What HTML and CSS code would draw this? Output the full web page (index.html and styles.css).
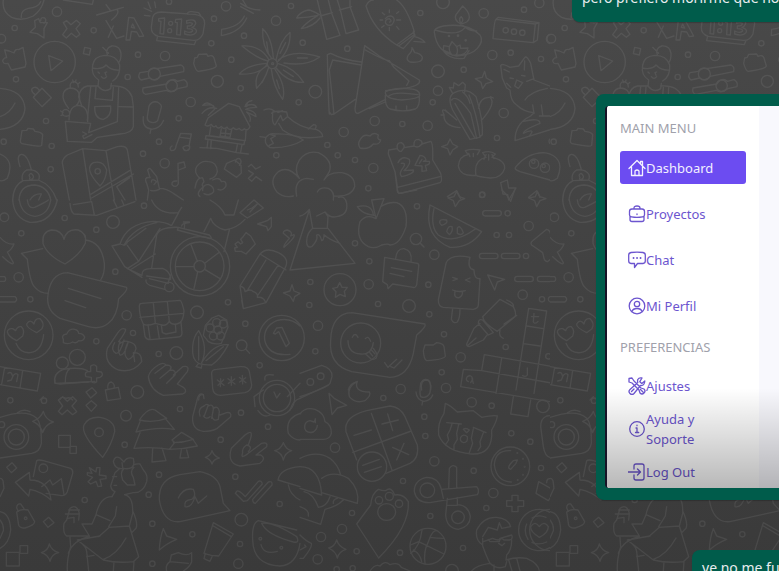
FILE: index.html
```html
<!DOCTYPE html>
<html lang="es">
<head>
<meta charset="utf-8">
<meta name="viewport" content="width=device-width, initial-scale=1">
<title>Chat</title>
<link rel="stylesheet" href="styles.css">
</head>
<body>
<svg class="wallpaper" aria-hidden="true">
  <defs>
    <g id="art">
      <!-- top left -->
      <g>
        <path d="M10 0Q5 35 35 52Q65 65 100 48Q125 30 132 0M64 52Q62 30 85 25Q115 22 122 5M190 0L277 13L280 0M290 45L370 22M318 14L330 30M335 60Q360 40 352 30M318 62L350 115L372 108M340 78L325 112M378 120L386 52L402 54L431 108L418 110L410 96L394 94L390 120ZM394 82L404 84L398 72Z"/>
        <path d="M116 56L121 68L142 68L132 86L132 114L112 101L90 97L106 82L104 62ZM122 62Q122 50 134 54Q142 62 132 70M190 68L200 62L213 74L229 61L241 71L228 86L240 103L229 112L214 100L199 114L188 104L201 86Z"/>
        <path d="M482 36L585 43Q615 48 614 70L609 101Q600 122 580 121L475 109Q453 103 454 82L458 52Q462 37 482 36M472 112L470 122L583 134L587 124M562 42Q563 34 575 35L596 38L602 46M432 24L455 34M433 46L450 48M444 6L452 26M464 6L467 23M476 56L494 54L491 102L480 101L483 64L476 63ZM527 58L545 57L541 105L530 104L532 68L526 67ZM560 62Q588 55 587 71Q583 80 576 82Q594 88 588 98Q579 110 554 102V93Q570 101 578 93Q579 86 562 86V78Q578 78 577 70Q570 66 560 70Z"/>
        <circle cx="512" cy="70" r="6"/><circle cx="509" cy="92" r="6"/>
        <circle cx="171" cy="35" r="14"/><circle cx="44" cy="84" r="8"/><circle cx="281" cy="91" r="8"/><circle cx="507" cy="5" r="8"/><circle cx="678" cy="19" r="14"/><circle cx="642" cy="56" r="8"/><circle cx="732" cy="107" r="8"/><circle cx="634" cy="130" r="8"/><circle cx="4" cy="116" r="13"/><circle cx="48" cy="238" r="8"/><circle cx="414" cy="164" r="8"/><circle cx="495" cy="168" r="14"/><circle cx="383" cy="231" r="8"/><circle cx="694" cy="179" r="8"/><circle cx="652" cy="244" r="18"/><circle cx="722" cy="265" r="8"/><circle cx="572" cy="306" r="14"/><circle cx="536" cy="355" r="8"/><circle cx="138" cy="363" r="8"/><circle cx="155" cy="438" r="8"/><circle cx="11" cy="425" r="8"/><circle cx="477" cy="425" r="8"/><circle cx="429" cy="461" r="8"/><circle cx="494" cy="490" r="14"/><circle cx="152" cy="508" r="8"/>
        <circle cx="164" cy="186" r="62"/><path d="M146 167L188 183L153 212ZM254 142L272 146L268 165L250 161Z"/>
        <path d="M28 153L42 159Q46 145 56 149L69 142L78 190L75 201L34 210L24 190Q8 194 8 181Q14 171 20 173L14 150Z"/>
        <path d="M733 48Q720 80 665 88L664 107Q720 98 740 54M722 10Q750 30 780 30M722 20L760 40M728 0L740 20"/>
        <path d="M296 240Q272 225 278 195Q283 168 315 166Q350 166 359 195Q362 228 338 243M277 204Q306 210 318 195Q334 212 358 210M322 164Q315 145 335 138Q359 136 363 160Q364 180 356 188M308 142L326 160M298 220L294 216M320 216L315 218L318 226M304 230Q312 240 320 230M296 240L294 258Q312 280 332 266L334 250M294 258L262 258Q240 263 236 290L246 320M332 258Q382 254 396 290L400 320V380Q396 400 360 402L292 412L275 427L202 424L196 364L272 370L266 398L352 365L356 260M272 260L262 360M288 262L285 296L337 301L340 262M356 320L400 321M284 320L332 318Q336 348 310 358Q283 356 284 320M248 396L260 402L248 408L252 416L276 404"/>
        <path d="M207 360Q208 316 236 316Q266 318 263 365M206 325Q185 300 190 280Q196 265 212 264Q238 266 239 290Q240 306 228 317M211 262Q208 246 222 245Q235 248 235 261M218 240L221 248M228 240L226 247M240 247L234 252M187 345Q186 328 198 328Q212 332 208 346Q200 352 187 345M182 333L189 338M183 347L189 344"/>
        <path d="M126 265L154 293L126 320L100 292ZM107 285Q92 276 96 266Q106 257 116 268L118 274M0 265Q70 270 75 325Q70 380 0 388M0 350Q30 340 45 309M66 392L80 391L84 385L100 387L105 394Q124 396 128 404L125 436Q120 442 66 431Q61 430 61 423Z"/>
        <path d="M420 218L445 214Q452 202 469 206L543 195Q555 200 551 215L480 229Q468 246 449 234L423 240Q411 230 420 218M429 264L500 252Q516 230 532 244L552 239Q565 246 561 260L533 266Q514 282 499 271L437 283Q425 278 429 264"/><circle cx="463" cy="222" r="18"/><circle cx="515" cy="257" r="17"/>
        <path d="M447 318Q455 302 472 306Q486 314 484 322L473 362Q464 372 448 365Q440 359 442 350ZM430 350Q426 384 453 387Q478 390 491 361M453 387L450 400M584 174L592 172L596 163L620 162L624 169Q638 163 642 174L649 198Q646 207 595 214Q588 214 581 190Z"/>
        <path d="M615 375L624 354L686 310L718 320L750 380Q743 395 733 386Q725 396 718 385Q708 393 700 383Q688 394 681 381Q672 391 664 379Q654 390 648 377Q640 385 634 373Q624 382 615 375M632 381L628 407L736 422L738 392M618 407L734 422L732 434L616 417ZM624 420L621 444M634 420L632 446M712 434L708 456M726 434L722 456M664 386L660 408L690 412L695 390M678 387L675 412M662 399L692 402M600 443L650 445L710 458L745 462M608 316Q620 300 642 320M608 316Q640 312 642 320M606 340Q625 318 650 325M625 346L644 328M740 320Q740 302 756 302Q738 306 735 320Q760 306 770 322Q748 322 737 328Q768 332 768 350L740 336Q755 350 750 364"/>
        <path d="M516 438Q506 445 514 452Q528 452 528 438L542 400L574 402L567 438Q558 435 549 442Q551 453 560 452Q571 449 569 438M541 412L571 416M530 543Q514 542 516 554Q528 566 535 551L534 490L552 486L556 502L536 510"/>
        <path d="M187 489Q187 475 202 465L248 446L318 452L352 440Q377 435 382 450L408 600M187 489L208 600M248 446L272 600M318 452L343 600M272 583L390 511M275 594L400 522L350 560L375 600M350 560L388 534M300 558Q250 505 280 488Q310 480 320 510Q318 540 300 558"/><circle cx="293" cy="514" r="8"/>
        <path d="M60 500Q48 466 64 463Q82 462 94 509M67 540Q63 520 80 510Q106 507 116 522Q120 530 116 540M38 600Q40 555 70 542L115 540Q155 555 170 600M57 600Q60 555 104 555Q145 560 152 600M90 600Q102 580 124 582L116 600M90 532Q84 524 93 520Q104 528 98 536Q86 543 90 532M0 462Q45 480 22 535Q10 545 0 542"/>
        <path d="M446 570L440 550Q430 530 450 533L443 510Q448 501 454 510L470 530L478 565Q500 565 520 580L550 600M446 570L442 600M454 546Q455 532 470 545L462 554M452 571Q462 575 478 568M598 533Q580 516 590 500Q604 480 625 485Q650 485 652 515Q648 533 630 537M585 564Q590 530 608 534L612 545Q602 555 610 560Q586 580 600 590M638 540Q660 530 664 545Q680 540 678 558Q668 575 654 568M608 572Q606 555 625 553Q643 560 641 575Q630 590 612 581"/>
        <path d="M704 480L680 490L673 507L710 532L724 519L723 496ZM706 486Q708 473 719 476Q728 484 718 496M745 500L754 493L767 507L781 500M746 512L760 521L745 535L755 544L768 530L785 542"/>
      </g>
      <!-- top right -->
      <g transform="translate(780 0)">
        <path d="M172 0L182 42L200 118L240 106L215 40L205 0M181 48L217 38M232 0L240 26L258 101L296 90L270 20L270 0M238 30L275 20M178 44Q155 30 145 30Q120 35 110 54Q145 52 174 46Q135 70 124 86Q160 80 180 54"/>
        <path d="M318 18Q325 0 340 0M318 18Q340 90 410 135L463 95Q440 20 410 0M410 135L430 146L465 106L460 94M416 138L462 104M464 110Q485 115 495 127L462 124M376 56Q386 44 398 50Q408 60 396 74Q384 80 377 70Q374 58 388 56Q398 64 389 66M388 30V38M388 82V92M360 60H368M410 60H422M367 38L374 44M410 80L417 88M410 40L416 35M365 82L372 77M456 142Q457 155 445 165Q436 180 450 186Q488 190 487 172Q482 160 464 158L458 146"/>
        <path d="M523 96Q520 85 550 78Q625 68 660 105Q672 123 652 145Q635 165 590 168Q530 160 523 96M525 90Q590 110 613 85M608 76Q626 94 650 93M602 72Q580 60 588 44L608 18Q628 35 628 52Q628 68 602 72M602 70Q595 55 604 50Q614 60 602 70M552 155Q570 180 612 175L627 152M572 160L550 150L551 137L568 140L576 125L590 140L600 135L602 145L624 144Q620 170 576 165Q566 155 568 140M590 140Q596 155 588 165"/>
        <path d="M708 58Q703 60 699 116L820 128L832 120L837 68L715 52ZM708 58L826 72L820 128M826 72L837 68"/><circle cx="737" cy="91" r="8"/><circle cx="762" cy="95" r="8"/><circle cx="787" cy="98" r="8"/><circle cx="567" cy="108" r="2"/><circle cx="594" cy="107" r="2"/><circle cx="617" cy="121" r="2"/>
        <circle cx="93" cy="18" r="8"/><circle cx="48" cy="62" r="14"/><circle cx="128" cy="128" r="8"/><circle cx="262" cy="146" r="8"/><circle cx="481" cy="39" r="8"/><circle cx="549" cy="7" r="19"/><circle cx="671" cy="40" r="14"/><circle cx="792" cy="29" r="8"/><circle cx="838" cy="9" r="14"/><circle cx="873" cy="117" r="14"/><circle cx="697" cy="165" r="14"/><circle cx="752" cy="158" r="8"/><circle cx="843" cy="177" r="8"/><circle cx="166" cy="275" r="19"/><circle cx="116" cy="307" r="8"/><circle cx="534" cy="214" r="19"/><circle cx="611" cy="209" r="8"/><circle cx="534" cy="272" r="14"/><circle cx="518" cy="307" r="8"/><circle cx="344" cy="363" r="14"/><circle cx="427" cy="372" r="8"/><circle cx="503" cy="377" r="14"/><circle cx="251" cy="396" r="14"/><circle cx="202" cy="435" r="8"/><circle cx="731" cy="339" r="14"/><circle cx="711" cy="414" r="8"/><circle cx="49" cy="466" r="8"/><circle cx="233" cy="466" r="8"/><circle cx="285" cy="480" r="8"/><circle cx="340" cy="504" r="14"/><circle cx="325" cy="565" r="8"/><circle cx="667" cy="584" r="8"/>
        <circle cx="37" cy="191" r="15"/><circle cx="38" cy="191" r="3"/><path d="M35 175Q5 140 8 86Q35 110 40 174M48 180Q60 120 90 97Q93 150 53 185M55 180Q100 145 179 171Q140 200 72 189M55 191Q105 205 131 247Q85 250 48 204M45 208Q80 260 68 298Q40 260 34 208M26 202Q15 240 -10 265Q-20 220 20 198M23 183Q-10 175 -54 138Q0 135 26 178M22 192Q0 225 -62 222Q-40 195 20 190M25 160L20 126M60 160L77 128M112 174H142M70 210L100 230M50 240L58 266M20 220L6 248"/>
        <path d="M208 342Q205 310 202 164L212 160Q250 180 304 186M218 180L303 195M218 180L208 210L222 342L214 344L208 336M222 342L286 298M314 137L358 168L478 240Q485 255 440 264L377 272M314 137L285 325Q285 342 294 340L377 298M316 150Q370 180 388 182L400 200L447 243L440 256M328 326L376 306"/>
        <path d="M376 276Q400 262 440 266Q480 266 479 286Q476 296 425 300Q374 296 376 276M376 286Q374 320 390 327Q430 338 466 327Q480 320 478 290M384 290Q400 272 474 284M408 318V328M440 318V328"/>
        <path d="M630 418L578 330Q560 290 583 278Q620 260 648 290Q670 360 667 404L658 412ZM650 415L632 340Q590 280 575 300M645 415L585 310M660 412Q650 340 627 285M608 276Q625 290 630 310M578 280L568 262L580 264L582 248L596 257L608 247L616 254L614 276M552 344Q540 320 562 336L590 360M552 344Q550 378 600 383M656 325Q660 290 690 292Q710 310 664 362M543 345L552 345M556 330L562 337M691 290L700 294"/>
        <path d="M674 214L679 234L698 245L678 251L668 266L663 247L646 236L667 232ZM570 417L578 432L593 440L578 450L570 465L563 446L545 440L562 434Z"/>
        <path d="M900 270L822 240L812 190Q800 165 794 173L776 198L750 202Q725 188 722 197L727 235L740 264L750 270Q752 305 770 315Q790 335 822 338L812 348Q765 370 765 422L900 380M794 183L793 210M732 208L748 216M750 234L760 236M785 226L795 228M740 250L752 262M764 258L770 240L788 248L775 265ZM800 244L822 236M818 315L822 340M844 315L848 344M790 364Q840 352 840 370Q790 390 790 400Q830 382 808 408M838 348L870 348"/>
        <path d="M35 340Q40 330 80 336L83 350Q120 385 168 388Q188 396 188 410Q110 422 68 390L56 370M38 340Q35 370 45 375L62 346L68 362L82 350M42 332Q30 322 12 330M54 338L68 332M145 387L160 374Q173 374 166 386M45 402Q100 400 130 420Q90 445 30 443Q10 430 18 412Q30 398 45 402M32 404L46 408L32 416L40 430L28 436M0 410L16 412M300 420Q310 400 330 408Q340 395 355 405Q350 418 362 420Q360 435 340 432Q325 450 300 444Q292 430 300 420"/>
        <path d="M386 450L412 446Q408 428 424 428Q435 435 432 443L462 438Q460 418 475 418Q488 422 486 432L512 424Q520 430 518 480L542 520Q548 545 540 548L424 580Q412 580 412 572L405 515L385 462ZM405 515Q410 545 412 562L540 530M412 446Q416 455 424 454L432 443M462 438Q474 446 486 432M414 488Q425 465 448 478Q455 490 432 512L460 510Q465 520 425 530Q415 520 430 502Q440 488 424 490M465 496L480 466Q496 468 498 480L490 484L508 484Q512 494 496 496L500 512L486 514L486 498ZM478 490L486 478"/>
        <path d="M648 526Q600 530 595 498Q598 468 624 464L616 452Q635 445 660 450L652 464M648 526Q640 480 678 472L668 458Q690 450 706 462L696 472Q735 480 734 505Q725 535 690 534Q655 530 648 526M626 460L630 470M640 460V470M678 464L672 478M686 464V480M696 464L702 476M768 500Q800 460 850 458Q890 460 900 500M768 500Q760 508 780 515L870 540"/><circle cx="822" cy="491" r="14"/><circle cx="820" cy="485" r="5"/><circle cx="855" cy="503" r="14"/><circle cx="851" cy="498" r="5"/>
        <path d="M118 535Q100 510 118 480Q140 450 175 458Q220 480 208 515L192 540M118 535Q85 495 55 515Q25 540 50 575Q70 595 100 588M192 540Q205 515 245 518Q285 525 284 560Q275 592 222 588M110 588Q100 540 140 535L160 538M172 576Q180 560 205 565Q225 575 220 600M722 548L742 540L746 564L768 564L746 600L743 584L729 582ZM562 590L590 572L602 596M806 592L830 572L840 592"/>
      </g>
      <!-- middle left -->
      <g transform="translate(0 600)">
        <circle cx="13" cy="52" r="13"/><circle cx="194" cy="54" r="8"/><circle cx="64" cy="100" r="8"/><circle cx="289" cy="89" r="8"/><circle cx="339" cy="66" r="19"/><circle cx="432" cy="17" r="8"/><circle cx="346" cy="215" r="8"/><circle cx="56" cy="232" r="14"/><circle cx="91" cy="298" r="8"/><circle cx="380" cy="346" r="14"/><circle cx="399" cy="399" r="8"/><circle cx="289" cy="424" r="8"/><circle cx="476" cy="462" r="8"/><circle cx="529" cy="459" r="19"/><circle cx="591" cy="337" r="19"/><circle cx="684" cy="307" r="8"/><circle cx="736" cy="371" r="8"/><circle cx="779" cy="496" r="8"/><circle cx="412" cy="576" r="19"/><circle cx="725" cy="436" r="16"/><path d="M737 447L749 460"/>
        <path d="M38 0Q42 55 90 67Q155 70 172 0M58 0Q65 45 105 49Q145 45 152 0M82 0Q85 28 104 22Q135 8 145 0M210 10Q212 35 222 42L290 46L405 5M220 14L275 5L283 45M340 0L352 24M365 0L372 16M455 0Q475 45 535 38L545 22M536 38L515 76M630 0Q665 20 675 45H702L715 0M720 38L762 0L790 24L742 54ZM742 30L756 24L772 12L750 36M632 55Q640 80 675 90Q710 85 735 58M632 55L612 95M688 90L672 155M773 72L802 62L814 52V80L804 92L800 80Z"/>
        <path d="M192 118Q200 85 235 90Q262 100 256 130Q240 165 195 192Q140 165 129 130Q125 95 155 90Q185 90 192 118M256 120Q305 125 313 190Q315 220 302 240M64 160L128 146M64 160L82 178Q90 250 105 262Q120 280 145 280"/>
        <path d="M202 218L380 262Q385 270 356 296Q352 350 325 370Q300 390 265 380L180 355Q142 335 143 295Q148 220 202 218M205 265L303 296M195 302L257 323"/>
        <path d="M360 132Q380 70 460 64Q500 66 512 76M372 136Q400 82 470 68M360 132L336 138L374 200L426 232M360 132Q380 140 382 126L438 85M382 136L416 184L382 206L426 226M466 162L390 210M416 184L480 85M455 204L470 105Q480 80 535 82M535 82L628 105Q638 115 630 116L532 90ZM545 78Q545 70 568 68M550 66L568 66M554 72L553 84M426 226Q425 206 450 206L488 205Q512 215 512 238L440 228M438 240Q436 250 450 256L494 268M448 236L505 250M512 225L505 246"/>
        <circle cx="600" cy="199" r="89"/><circle cx="599" cy="199" r="73"/><circle cx="599" cy="199" r="17"/><circle cx="508" cy="261" r="14"/><path d="M528 200H582M573 134L592 184M656 158L614 190M660 236L614 208M582 266L593 216"/>
        <path d="M705 132L714 125L722 132L728 128L722 118L728 112L738 98L752 108L766 132L738 162L724 154L706 154L704 144L712 142ZM720 258L780 162Q800 140 835 158Q870 175 856 202L798 308L730 326L720 258Q735 262 735 275Q750 265 760 275Q775 280 772 292Q790 290 796 305M730 326L725 302M780 162L858 210M744 268L798 180M772 288L834 196M850 100Q848 92 862 90Q880 96 872 108L882 104Q888 110 852 142Q848 138 868 115Z"/>
        <path d="M876 254L882 273L900 280L884 290L880 304L870 288L850 279L870 273ZM0 112Q20 135 42 132Q35 150 22 156L40 188Q40 200 8 170M0 230H14Q20 237 14 244H0M0 290H45Q55 297 45 306H0"/>
        <circle cx="86" cy="406" r="73"/><path d="M47 392Q52 378 64 380Q75 390 68 408L50 422Q25 410 22 396Q24 384 38 386ZM102 372Q105 354 120 356Q135 370 126 386L110 398Q78 382 80 372Q90 355 102 372M48 430Q60 460 90 458Q125 455 131 404M190 418Q182 405 200 402Q208 385 224 388Q235 390 236 400Q250 400 254 412Q250 425 236 422Q230 432 218 426Q205 435 190 428Z"/>
        <path d="M418 318Q418 310 425 310L540 301Q545 302 552 332Q550 370 530 372Q515 375 508 364Q498 380 482 374Q475 372 466 370Q440 380 430 372Q418 350 418 318M460 309L466 370M502 304L508 366M420 352L550 340M430 374L435 410Q440 420 452 419L535 411Q545 410 546 400L543 366M444 374L450 416M472 378L478 416M484 376L487 398L498 402L528 396L526 372"/>
        <path d="M352 400Q365 380 377 388Q378 395 356 425M352 400L322 445Q310 490 355 510Q400 520 425 485Q425 455 400 458L404 485M344 428Q330 450 348 460Q360 462 372 420M360 425Q350 450 360 465Q372 470 385 425Q375 420 360 430M385 425Q408 430 408 446Q400 475 385 478Q365 465 385 425"/>
        <path d="M596 392Q580 410 578 440Q575 480 596 490Q610 495 635 495Q660 480 685 434Q640 430 605 488M596 392Q625 440 606 486M596 490L588 500L604 504L606 492M596 410V480M670 440L618 482M610 406L616 376L636 354L656 346L680 360L684 382L664 430Q640 435 625 425Z"/><circle cx="630" cy="384" r="12"/><circle cx="650" cy="368" r="12"/><circle cx="654" cy="390" r="12"/><circle cx="670" cy="372" r="12"/><circle cx="640" cy="408" r="12"/><circle cx="662" cy="408" r="12"/>
        <circle cx="845" cy="414" r="68"/><path d="M900 378Q870 350 830 362Q790 380 794 420Q805 470 870 463M820 400L830 384L846 382L868 430L858 440L836 395L826 402Z"/>
        <path d="M0 500L122 520L112 573L0 554M14 503L5 552M68 512L60 564M24 520Q35 512 38 530Q45 516 54 524L50 545M23 543L34 540L38 530"/><circle cx="187" cy="489" r="18"/><circle cx="232" cy="472" r="24"/><path d="M165 550Q158 520 190 508Q240 500 262 512M165 550L266 546M196 548Q195 515 210 506M272 498Q284 490 290 500V514L304 516Q312 526 300 532L290 534V546Q280 552 274 544V532L258 530Q252 520 262 515H272Z"/>
        <path d="M445 530Q450 510 475 495Q490 485 498 495L465 520M498 495Q520 496 510 510L480 535M510 510Q530 510 525 525L500 550M520 525L548 500Q570 495 562 515L532 552L550 562Q565 575 548 582L490 586Q450 570 445 530M635 520Q635 508 650 508L720 500Q745 498 748 515L755 555Q755 572 735 578L662 586Q640 585 638 565ZM652 540L672 556M662 536L661 560M671 539L654 556M684 536L705 552M694 530L694 556M704 537L685 550M718 532L738 548M727 526L728 552M737 533L719 546"/>
        <path d="M316 570L355 562L362 596L322 602ZM324 568Q320 548 334 546Q346 552 342 565M130 590L120 600M180 598Q185 588 198 595Q210 590 218 600M258 576L276 563L290 578L272 594ZM596 600Q596 582 610 584L612 596"/>
      </g>
      <!-- middle right -->
      <g transform="translate(900 570)">
        <circle cx="351" cy="49" r="8"/><circle cx="546" cy="15" r="8"/><circle cx="165" cy="160" r="8"/><circle cx="208" cy="214" r="8"/><circle cx="403" cy="194" r="14"/><circle cx="206" cy="283" r="14"/><circle cx="31" cy="276" r="8"/><circle cx="28" cy="345" r="8"/><circle cx="54" cy="407" r="14"/><circle cx="46" cy="484" r="8"/><circle cx="234" cy="342" r="8"/><circle cx="327" cy="348" r="19"/><circle cx="385" cy="284" r="8"/><circle cx="388" cy="373" r="8"/><circle cx="432" cy="433" r="8"/><circle cx="482" cy="502" r="14"/><circle cx="425" cy="547" r="8"/><circle cx="617" cy="471" r="8"/><circle cx="745" cy="499" r="8"/><circle cx="668" cy="314" r="14"/><circle cx="726" cy="328" r="8"/><circle cx="686" cy="108" r="14"/><circle cx="623" cy="70" r="8"/><circle cx="590" cy="135" r="8"/><circle cx="627" cy="135" r="8"/><circle cx="678" cy="198" r="8"/><circle cx="348" cy="147" r="17"/><path d="M360 159L372 171"/>
        <rect x="548" y="62" width="56" height="16" rx="8"/><rect x="538" y="190" width="56" height="16" rx="8"/><rect x="604" y="190" width="56" height="16" rx="8"/><rect x="644" y="259" width="56" height="16" rx="8"/><rect x="712" y="259" width="56" height="16" rx="8"/><rect x="745" y="320" width="56" height="16" rx="8"/>
        <path d="M28 60L-30 240L165 220L84 115H38Q20 130 20 155M0 78Q15 75 28 58L38 115M50 78L75 66L84 80L82 112M75 66Q90 85 110 80Q145 75 140 40Q135 15 115 22M20 155Q20 175 35 170Q55 150 50 135Q60 130 65 152Q72 150 72 134Q90 150 120 160"/>
        <path d="M228 86Q200 70 180 95Q165 150 205 170Q225 178 245 165Q265 160 270 165Q300 165 318 110Q325 50 290 38Q265 35 242 50M228 86L215 30L252 26ZM220 74Q215 40 172 50Q185 72 222 76"/>
        <path d="M390 45L545 125Q510 175 450 172Q370 140 390 45M402 56Q390 110 415 135Q460 165 525 118M420 100Q415 85 440 90Q445 100 425 106ZM440 125Q445 105 456 110Q460 125 448 134ZM472 114Q480 102 490 128Q485 138 472 130Z"/>
        <path d="M254 202L352 220Q358 222 356 230L350 285Q345 295 340 292L278 282L264 296L262 284L248 275ZM287 206Q290 175 312 176Q338 182 333 214M274 233L335 244M270 250L312 260"/>
        <circle cx="120" cy="299" r="48"/><path d="M119 278L126 292H142L133 304L136 320L120 313L106 322L108 305L98 295L112 292Z"/>
        <path d="M510 202Q450 190 438 220L415 330Q415 350 430 352L520 358Q535 355 535 345L540 266Q522 268 522 240Q500 235 510 202M458 262L472 267L459 272M510 264L496 270L510 276M458 300Q475 308 496 302M465 304Q460 325 478 323Q490 315 487 304M458 355L454 388Q460 402 472 396Q480 385 480 358M563 255L614 268L592 276L584 300Z"/>
        <path d="M740 118Q750 120 752 134L765 160L785 162Q796 168 788 178L742 215Q735 215 732 205L728 188L695 165Q690 158 698 152ZM762 202L788 225Q795 218 785 205L775 190"/>
        <path d="M470 4L478 20L494 26L478 32L466 50L460 32L444 24L462 20ZM712 4L720 20L738 26L720 32L710 50L704 32L686 24L706 20ZM606 0L620 15L632 34L644 0M292 0L296 10L350 0"/>
        <path d="M155 368L375 402Q380 410 350 435L340 490Q325 560 270 562L155 545Q85 525 92 450Q95 370 155 368M144 452Q145 490 182 492Q215 495 220 458M157 442Q165 425 174 442M196 446Q205 435 212 454M197 492L214 508Q235 510 230 490L220 475M208 486L218 498M214 480L225 492M254 518L264 532L290 508M272 530L282 534L306 510"/><circle cx="182" cy="459" r="60"/>
        <path d="M375 465L400 465L410 458Q430 460 432 470L436 498Q435 508 380 512Q372 510 370 482ZM600 328L640 350Q650 370 645 380L592 424Q550 400 548 380ZM620 330Q645 340 640 352M650 376L612 402M548 390Q535 385 535 400L565 435L580 428ZM540 400L522 415L500 462Q500 470 508 470L550 450L562 434M504 466L528 444M600 420Q595 440 610 445"/>
        <path d="M686 355L740 363L702 610M686 355L648 600M680 408L730 416M670 461L720 468M553 494L873 550L864 604M553 494L545 542L490 538L482 590L864 654M545 542L862 598M605 504L588 610M702 370L700 396Q705 404 714 394M694 380H716M682 534V555Q678 562 668 557M505 575Q495 570 502 560Q515 552 518 568L512 578M516 565L520 580"/>
        <path d="M0 550L65 526Q98 535 96 560L90 580Q80 594 0 620M172 575Q150 580 145 600M365 600Q360 570 380 570Q395 572 392 600"/><circle cx="31" cy="576" r="10"/><circle cx="62" cy="559" r="10"/>
      </g>
      <!-- bottom left -->
      <g transform="translate(0 1140)">
        <circle cx="31" cy="61" r="8"/><circle cx="132" cy="62" r="8"/><circle cx="374" cy="194" r="8"/><circle cx="378" cy="107" r="16"/><circle cx="540" cy="87" r="8"/><circle cx="723" cy="98" r="8"/><circle cx="804" cy="140" r="8"/><circle cx="662" cy="179" r="8"/><circle cx="706" cy="290" r="8"/><circle cx="477" cy="284" r="8"/><circle cx="446" cy="344" r="8"/><circle cx="254" cy="360" r="8"/><circle cx="457" cy="431" r="8"/><circle cx="577" cy="463" r="8"/><circle cx="457" cy="551" r="8"/><circle cx="724" cy="419" r="19"/><circle cx="720" cy="492" r="8"/><circle cx="715" cy="551" r="14"/><circle cx="839" cy="372" r="8"/><circle cx="297" cy="157" r="13"/><circle cx="130" cy="265" r="13"/>
        <path d="M175 60L188 50L202 64L218 50L230 62L216 78L230 95L218 104L202 90L186 104L175 94L188 78ZM258 76L274 62L290 76L274 94ZM308 232Q240 160 252 135Q265 110 300 112Q345 120 344 155Q335 195 308 232M176 166H211V202H176ZM210 199H229V220H210ZM20 262L36 248L50 264L34 278ZM130 425L146 412L162 428L144 442ZM19 517H58V558H19ZM60 497H83V520H60Z"/>
        <path d="M130 94Q136 118 160 126Q135 134 128 158Q122 134 98 124Q122 116 130 94M0 112Q80 85 110 115Q125 130 124 190Q120 215 95 220L0 234M52 98Q70 85 90 95"/><circle cx="49" cy="171" r="37"/><circle cx="49" cy="171" r="24"/><circle cx="5" cy="134" r="9"/>
        <path d="M418 120Q445 80 465 90L500 115Q460 130 418 120M420 125L408 156Q470 140 523 148L498 118M420 158L402 205Q460 200 510 208M458 206L456 246L498 242L486 204M508 208L524 188L516 180L545 157L580 178Q550 188 520 188M524 188L508 208Q550 208 592 198L580 180M544 210L540 234L566 233L560 210"/>
        <path d="M610 44Q595 35 590 65L578 110Q575 150 610 154Q645 155 660 138L692 110Q695 95 680 98L660 105M600 108Q592 85 612 78Q620 70 625 75L612 110M625 78Q640 70 640 88L635 115M640 85Q655 75 658 95L655 118Q640 125 636 110M630 110Q618 120 610 108M735 165Q760 145 752 175L745 195M735 165L694 205Q680 250 720 258L780 250Q800 235 782 225L768 225L800 200Q805 185 785 190L745 220Q720 240 728 218Q725 205 740 195Q760 200 745 215"/>
        <path d="M850 188Q858 208 875 212Q855 218 850 240Q845 218 824 212Q842 208 850 188M636 212Q642 228 658 234Q640 238 636 252Q632 238 616 232Q632 228 636 212M148 492Q155 512 176 518Q155 522 150 544Q144 524 124 518Q144 512 148 492M0 295Q10 295 10 310L12 325L0 350"/>
        <path d="M110 242Q115 238 130 242L212 265Q220 270 218 280L202 335Q195 350 180 346L138 340M110 242L100 290M125 320L150 300L158 315L184 296L192 344M46 307L88 277L90 300Q145 300 153 360Q125 335 90 328L86 348Z"/>
        <path d="M268 263L288 276L290 263H300L298 285L318 288L318 296L300 298L305 318L294 320L288 304L272 312L264 305L278 292L262 285V278L276 280ZM370 265Q345 270 340 245Q345 225 360 234L372 246Q380 230 400 235Q405 255 395 263Q385 268 370 265M366 248L368 262M345 278L360 265M396 262Q400 250 420 252L430 270Q445 285 440 305Q430 340 400 338L374 344M345 278L332 318Q335 332 345 335L336 350M402 262Q388 275 400 292L405 315H382L368 300Q360 275 370 268M342 316H350M338 290H350"/>
        <path d="M336 350Q300 350 288 404L330 422M374 344Q400 350 398 400L388 438L328 442L296 470M350 380L346 408L326 440M288 404L276 432H246L268 468H200Q188 460 192 430L200 420M200 420L210 385Q230 370 238 400L236 420M206 390H238M196 402H236M202 415L222 412V428M388 438L416 530L400 545Q350 550 310 540L232 480L300 468M378 474Q350 525 310 538M398 392Q415 430 408 445L395 458L388 438M210 472L212 500Q200 540 202 573M268 470Q220 480 205 520M232 480Q260 500 260 515L266 573M260 530L282 526M342 545L340 573M402 545L400 573"/>
        <path d="M50 384Q50 370 62 372L72 386M50 396Q65 385 84 390L104 425Q104 435 75 444Q60 445 56 436ZM50 384L55 394M0 395Q30 400 32 450Q28 490 0 505M0 420Q12 435 10 452L0 475"/><circle cx="77" cy="415" r="4"/>
        <path d="M540 284L600 275Q650 285 660 320L670 370L690 392L540 425Q490 430 478 360Q475 295 540 284M535 354Q550 322 580 328Q590 350 575 358Q550 360 555 380Q575 385 585 350L595 370L620 348M490 446L500 468L530 478Q500 490 478 510Q480 470 490 446M640 428L700 462L656 528L634 526L612 520ZM640 438L694 470M616 520L612 536L630 544L637 528"/>
        <path d="M710 334Q715 328 736 350L775 304Q785 300 787 312L742 362L730 364L706 340ZM758 358L805 306Q818 302 816 315L766 370Q758 370 758 358M834 300Q840 265 900 260M834 300L900 320M865 315Q870 345 900 360M758 480Q755 430 775 422L890 450M758 480Q760 555 840 558Q890 555 900 490M785 430Q820 425 890 470Q900 490 880 486Q800 465 785 430M783 494Q790 525 832 514"/><circle cx="781" cy="476" r="4"/><circle cx="844" cy="503" r="4"/>
        <path d="M510 545L514 525L535 518Q560 530 575 518V545Q570 560 550 573M500 573Q495 555 510 545L565 550M165 0Q160 12 180 12L285 4M795 0Q790 -20 820 -15M765 80L762 50L790 30M774 92Q790 115 810 105M862 50L900 10M870 90Q880 60 900 55M865 160Q855 115 900 100M865 160Q880 180 900 180M822 36L830 54L840 40"/><circle cx="831" cy="54" r="53"/><circle cx="831" cy="54" r="41"/>
      </g>
      <!-- bottom right -->
      <g transform="translate(900 1140)">
        <circle cx="302" cy="27" r="14"/><circle cx="250" cy="54" r="8"/><circle cx="438" cy="24" r="14"/><circle cx="373" cy="110" r="8"/><circle cx="376" cy="168" r="8"/><circle cx="515" cy="67" r="14"/><circle cx="575" cy="77" r="8"/><circle cx="729" cy="79" r="19"/><circle cx="634" cy="160" r="8"/><circle cx="691" cy="185" r="8"/><circle cx="105" cy="203" r="14"/><circle cx="309" cy="303" r="8"/><circle cx="403" cy="244" r="14"/><circle cx="521" cy="272" r="8"/><circle cx="580" cy="339" r="14"/><circle cx="559" cy="384" r="8"/><circle cx="391" cy="408" r="8"/><circle cx="489" cy="504" r="8"/><circle cx="300" cy="518" r="8"/><circle cx="170" cy="514" r="8"/><circle cx="126" cy="447" r="14"/><circle cx="156" cy="399" r="8"/><circle cx="63" cy="471" r="14"/><circle cx="53" cy="538" r="14"/><circle cx="110" cy="568" r="8"/><circle cx="158" cy="565" r="8"/><circle cx="456" cy="572" r="19"/><circle cx="723" cy="264" r="8"/>
        <path d="M0 55L85 15M87 40L104 56L140 76L112 84L96 104ZM172 4Q160 35 208 36Q215 45 195 62Q165 72 148 50Q140 20 172 4M362 50Q358 40 362 10Q370 -6 385 0Q395 10 390 38Q380 58 362 50M348 36Q350 60 372 64Q392 62 398 45M368 64L366 75M0 102Q15 80 45 88Q72 98 75 125Q95 135 94 160Q90 178 70 178H0M46 118L42 126L30 122Q12 125 14 145Q20 162 40 156Q52 148 52 136M46 116V128M640 50L632 102L684 110L692 60"/>
        <path d="M200 92L270 78Q300 80 315 110L352 195Q358 235 330 250L258 280M200 92Q130 110 138 155L170 240M214 100L276 270M158 217L334 153M162 166L214 150M246 132L295 120M263 102L278 152M278 202L326 224M312 190L290 240"/><circle cx="216" cy="260" r="44"/><path d="M188 256L238 238M193 277L244 260"/>
        <path d="M436 70Q450 75 472 96L520 92L545 112Q580 105 592 108Q590 125 575 150Q580 225 515 222Q435 215 416 165Q412 130 432 100ZM440 128L484 132M456 132L450 150L442 165L446 180L436 195M476 134L470 160L472 178L462 195L462 210M520 142L558 158M520 146L514 175L518 190L508 218M550 158L540 185L542 200L534 212M490 148Q498 142 508 150L500 158ZM482 172Q490 160 502 170Q505 188 490 188Q478 184 482 172"/>
        <circle cx="631" cy="259" r="58"/><path d="M632 212Q585 210 583 255Q590 305 634 306M652 240L648 250L632 268L626 264Q625 256 640 242Z"/><circle cx="652" cy="219" r="1"/><circle cx="669" cy="236" r="1"/><circle cx="674" cy="260" r="1"/><circle cx="669" cy="284" r="1"/><circle cx="653" cy="300" r="1"/>
        <path d="M750 107L740 108Q722 115 722 140L730 200Q735 230 750 232"/>
        <path d="M0 235Q50 210 90 235Q115 255 122 285M0 260Q60 260 65 345L0 325M65 295Q100 270 145 295Q180 330 172 370L65 338M12 335Q40 340 55 382Q80 380 90 350M100 370Q98 358 112 355M130 360Q110 380 75 388L62 433L0 412M0 380Q30 390 25 408"/>
        <path d="M236 534L170 432L212 375Q215 340 235 328Q255 335 260 330Q275 320 284 345Q310 340 325 365Q330 440 236 534"/><circle cx="237" cy="361" r="11"/><circle cx="268" cy="349" r="12"/><circle cx="297" cy="371" r="11"/><ellipse cx="260" cy="396" rx="27" ry="25"/>
        <circle cx="382" cy="331" r="22"/><circle cx="474" cy="412" r="19"/><path d="M424 327Q415 292 380 292Q342 300 343 335Q350 370 390 368L532 344Q540 330 530 320L424 328L430 355M446 326L448 265Q458 250 470 262L470 324M442 355L437 405Q440 445 475 448Q510 440 511 410Q505 375 472 374V352M442 376H472"/>
        <circle cx="384" cy="499" r="54"/><path d="M366 450Q360 500 332 520M356 485L432 522M390 472Q410 475 432 475M390 472L384 488Q370 515 375 550M332 495L358 484M390 472Q400 450 410 452M340 510Q360 520 365 545"/>
        <path d="M750 397A62 62 0 1 0 750 503M718 472Q690 455 692 440Q705 420 718 440Q732 420 745 440Q745 458 718 472M696 414Q715 402 738 412M680 432Q670 455 684 478M696 487Q715 497 740 486M636 346H654V362H671V379H654V395H636V379H620V362H636Z"/>
        <path d="M548 495Q525 480 530 450Q550 410 590 412Q625 415 632 440L605 445L598 428L592 450L565 442L548 470M548 475V498Q560 530 565 540L570 550Q590 570 616 560L620 545M635 480Q635 510 620 525L618 540Q650 530 680 535Q715 550 718 573M570 550Q530 555 515 573M550 485L578 475Q600 485 600 475L635 465Q640 475 630 480L612 480Q600 470 598 485H570L565 478M596 490L606 497L614 490M582 573V555M626 540L636 573M650 535L660 573"/>
        <path d="M110 480Q116 500 138 508Q116 515 112 534Q108 515 86 504Q104 500 110 480M0 465Q20 485 34 490Q38 500 10 535H0M210 573Q225 550 240 558Q255 540 270 554Q295 545 304 562L330 573M0 510L18 500L14 495M716 305L750 324M716 305L708 340L745 362L750 354M740 308Q740 295 750 296"/>
      </g>
    </g>
    <g id="seam">
      <!-- shapes that cross the tile's edge -->
      <circle cx="5" cy="424" r="8"/>
      <circle cx="1" cy="1590" r="62"/>
      <path d="M-8 265Q-60 275 -75 300"/>
      <circle cx="4" cy="116" r="13"/>
    </g>
    <pattern id="doodles" width="1650" height="1713" patternUnits="userSpaceOnUse" patternTransform="scale(.33333)">
      <use href="#art"/>
      <use href="#seam" x="1650"/>
    </pattern>
  </defs>
  <rect class="paper" width="100%" height="100%" fill="url(#doodles)"/>
</svg>

<main class="chat">
  <p class="bubble bubble-first">pero prefiero morirme que no</p>

  <article class="bubble bubble-image">
    <div class="shot">
      <nav class="menu" aria-label="Main menu">
        <h2>MAIN MENU</h2>
        <ul>
          <li><a class="active" href="#dashboard">
            <svg class="icon" viewBox="0 0 18 18"><path d="M1 9.500L9 1.500l8 8M3.500 8v8.500h11V8M12.500 4.500V2.500h2v4M7 16.500v-4.500q2-2 4 0v4.500"/></svg>Dashboard</a></li>
          <li><a href="#proyectos">
            <svg class="icon" viewBox="0 0 18 18"><path d="M4 4h10q2.500 0 2.500 2.500V10q0 1.500-2 1.800-5.500 1-11 0-2-.3-2-1.800V6.500Q1.500 4 4 4zM6 4V3q0-2 3-2t3 2v1M2 11.500V14.500q0 2 2 2h10q2 0 2-2v-3M9 9v.6"/></svg>Proyectos</a></li>
          <li><a href="#chat">
            <svg class="icon" viewBox="0 0 18 18"><path d="M3 1.500q6-.8 12 0 2.300.5 2.300 2.500v6q0 2.300-2.300 2.500H9.500L6.500 16.500v-4H3Q.700 12.300.700 10V4Q.700 2 3 1.500z"/><path class="dots" d="M5.500 7h.1M9 7h.1M12.500 7h.1"/></svg>Chat</a></li>
          <li><a href="#perfil">
            <svg class="icon" viewBox="0 0 18 18"><circle cx="9" cy="9" r="7.800"/><circle cx="9" cy="7" r="2.700"/><path d="M3.800 14.500q1.200-3 5.200-3t5.200 3"/></svg>Mi Perfil</a></li>
        </ul>
        <h2>PREFERENCIAS</h2>
        <ul class="compact">
          <li><a href="#ajustes">
            <svg class="icon" viewBox="0 0 18 18"><path d="M1 1.500L4 1l2 3 7 7 3 1q2 2 0 4t-4 0l-1-3-7-7-3-1zM16.800 4l-3 2.500-2-1.800L14 1q-3-.7-4.200 1.500-.5 1.500 0 3L2 12.500q-2 2 0 4t4 0L12.500 8.500q4 .5 4.300-4.500zM3.500 14.500L6 12M12.500 12.500l2.500 2.500"/></svg>Ajustes</a></li>
          <li><a href="#ayuda">
            <svg class="icon" viewBox="0 0 18 18"><circle cx="9" cy="9" r="7.300"/><path d="M8 8h1v4.500M7.500 12.500h3.200M9 5.200v.5"/></svg><span>Ayuda y<br>Soporte</span></a></li>
          <li><a href="#logout">
            <svg class="icon" viewBox="0 0 18 18"><path d="M6 6V3q0-2 2-2h6q2 0 2 2v12q0 2-2 2H8q-2 0-2-2v-3M0 9h12M9.500 6L12.500 9l-3 3"/></svg>Log Out</a></li>
        </ul>
      </nav>
    </div>
  </article>

  <p class="bubble bubble-last">ye no me fu</p>
</main>
</body>
</html>
```
FILE: styles.css
```css
* {
  box-sizing: border-box;
}

body {
  margin: 0;
  height: 100vh;
  overflow: hidden;
  background: linear-gradient(#494949, #3a3a3a);
  font-family: "Noto Sans", "Open Sans", sans-serif;
}

.wallpaper {
  position: absolute;
  inset: 0;
  width: 100%;
  height: 100%;
  z-index: -1;
  opacity: .07;
  fill: none;
  stroke: #fff;
  stroke-width: 4;
  stroke-linecap: round;
  stroke-linejoin: round;
}

.paper {
  stroke: none;
}

.chat {
  display: flex;
  flex-direction: column;
  align-items: flex-end;
}

.bubble {
  flex: none;
  margin: 0;
  overflow: hidden;
  background: #005c4b;
  color: #e9edef;
  font-size: 14px;
  line-height: 20px;
  white-space: nowrap;
  box-shadow: 0 1px 1px rgba(0, 0, 0, .2);
}

.bubble-first {
  display: flex;
  align-items: flex-end;
  width: 207px;
  height: 22px;
  padding: 0 0 14px 10px;
  border-radius: 0 0 0 8px;
}

.bubble-image {
  width: 183px;
  margin-top: 72px;
  padding: 12px 0 12px 9px;
  border-radius: 8px 0 0 8px;
}

.bubble-last {
  width: 87px;
  margin-top: 50px;
  padding: 8px 0 8px 10px;
  border-radius: 8px 0 0;
}

.shot {
  position: relative;
  display: flex;
  overflow: hidden;
  border-left: 2px solid #171327;
  border-radius: 4px 0 0 4px;
  background: #f8f8fd;
}

.shot::after {
  content: "";
  position: absolute;
  inset: auto 0 0;
  height: 100px;
  background: linear-gradient(transparent, rgba(0, 0, 0, .28));
}

.menu {
  width: 152px;
  padding: 12px 13px 0;
  background: #fff;
  font-size: 13px;
}

.menu h2 {
  margin: 0 0 13px;
  color: #a0a1ab;
  font-size: 13px;
  font-weight: 400;
  line-height: 20px;
}

.menu ul {
  display: grid;
  gap: 13px;
  margin: 0 0 15px;
  padding: 0;
  list-style: none;
}

.menu a {
  display: flex;
  align-items: center;
  min-height: 33px;
  padding: 0 8px;
  border-radius: 3px;
  color: #6c55cf;
  text-decoration: none;
}

.menu a.active {
  background: #6c4cf1;
  color: #f3f0ff;
}

.menu .compact {
  gap: 7px;
  margin: 0;
}

.menu .compact a {
  min-height: 32px;
}

.icon {
  flex: none;
  width: 18px;
  height: 18px;
  fill: none;
  stroke: currentColor;
  stroke-width: 1.3;
  stroke-linecap: round;
  stroke-linejoin: round;
}

.dots {
  stroke-width: 1.8;
}
```
